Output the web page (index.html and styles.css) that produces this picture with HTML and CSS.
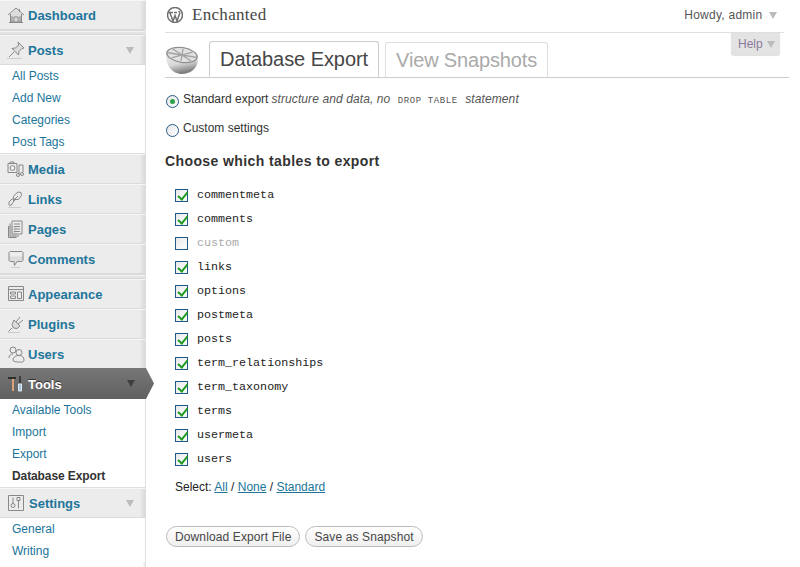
FILE: index.html
```html
<!DOCTYPE html>
<html lang="en">

<head>
  <meta charset="UTF-8">
  <title>Database Export</title>
  <link rel="stylesheet" href="styles.css">
</head>

<body>
  <aside class="sidebar">
    <a class="menu-item">
      <svg class="icon" viewBox="0 0 18 18"><path class="fill" d="M3.500 8 9 3l5.500 5v8h-11z" /><path d="M1 9 9 2l8 7M3.500 8v8h11V8M2 16.500h14M7 16v-5h4v5M5 10v6M13 10v6M12.500 3v3" /></svg>
      <b>Dashboard</b>
    </a>
    <div class="menu-sep"></div>
    <a class="menu-item open">
      <svg class="icon" viewBox="0 0 18 18"><path class="fill" d="M11 1l6 6-2 .5-3 3-.5 3.500L5 7.500 8.500 7l3-3z" /><path d="M11 1l6 6-2 .5-3 3-.5 3.500L5 7.500 8.500 7l3-3zM7 11l-5 5" /><path class="ground" d="M0 17.500h15" /></svg>
      <b>Posts</b><i class="arrow"></i>
    </a>
    <ul class="submenu">
      <li>All Posts</li>
      <li>Add New</li>
      <li>Categories</li>
      <li>Post Tags</li>
    </ul>
    <a class="menu-item">
      <svg class="icon" viewBox="0 0 18 18"><path d="M1 3.500h9v9H1zM3 3.500V2h4v1.500" /><circle cx="5.500" cy="8" r="2.500" /><path d="M12 5h4v7M12 5v9" /><circle cx="11" cy="15" r="1.500" /><circle cx="15" cy="14" r="1.500" /></svg>
      <b>Media</b>
    </a>
    <a class="menu-item">
      <svg class="icon" viewBox="0 0 18 18"><path d="M2 12l3-3 3 .5-4 6-2-.5zM8 9.500l-2-1 1-3 4-3.500 3 .5 .5 3-3 4zM6 11l5-5" /><path class="ground" d="M1 17.500h13" /></svg>
      <b>Links</b>
    </a>
    <a class="menu-item">
      <svg class="icon" viewBox="0 0 18 18"><path class="fill" d="M1.500 6h8v11.500h-8z" /><path d="M5 1h10v13H5zM3 3.500V16h9M1.500 6v11.500h8M7 4h6M7 6.500h6M7 9h6M7 11.500h6" /></svg>
      <b>Pages</b>
    </a>
    <a class="menu-item">
      <svg class="icon" viewBox="0 0 18 18"><path class="fill" d="M2 6.500h14v4l-1 1h-5l-2.500 4-.5-4H3l-1-1z" /><path d="M3 1.500h12l1 1v8l-1 1h-5l-2.500 4-.5-4H3l-1-1v-8z" /><path class="ground" d="M4 17.500h9" /></svg>
      <b>Comments</b>
    </a>
    <div class="menu-sep"></div>
    <a class="menu-item">
      <svg class="icon" viewBox="0 0 18 18"><path d="M1.500 1.500h15v14h-15zM1.500 4.500h15M3.500 7h5v2h-5zM3.500 11h5v2.500h-5zM10.500 7h4v6.500h-4z" /></svg>
      <b>Appearance</b>
    </a>
    <a class="menu-item">
      <svg class="icon" viewBox="0 0 18 18"><path class="fill" d="M7 5l6 6-3 2.500-3.500-.5L5 9.500z" /><path d="M7 5l6 6-3 2.500-3.500-.5L5 9.500zM9 7l4-5M11 9l5-4M5 13l-3.500 3.500" /><path class="ground" d="M1 17.500h12" /></svg>
      <b>Plugins</b>
    </a>
    <a class="menu-item">
      <svg class="icon" viewBox="0 0 18 18"><circle cx="6" cy="5" r="3" /><circle cx="12" cy="7.500" r="3" /><path d="M2 13c0-3 2-4 4-4M6 15c0-3 3-4.500 6-4.500s5 1.500 5 4.500-4 2-5.500 2S6 17 6 15z" /></svg>
      <b>Users</b>
    </a>
    <a class="menu-item current">
      <svg class="icon tools" viewBox="0 0 18 18"><path class="hammer" d="M6 4v12" /><path class="head" d="M1 3h8" /><path class="head thin" d="M13 1v7" /><path class="driver" d="M11.500 9h3v7h-3z" /></svg>
      <b>Tools</b><i class="arrow"></i>
    </a>
    <ul class="submenu">
      <li>Available Tools</li>
      <li>Import</li>
      <li>Export</li>
      <li class="active">Database Export</li>
    </ul>
    <a class="menu-item open">
      <svg class="icon" viewBox="0 0 18 18"><path d="M1.500 1.500h15v15h-15zM6 3.500v6M12 3.500h-2v3h3v-3zM11.500 6.500v8" /><circle cx="6" cy="11.500" r="2" /></svg>
      <b class="shifted">Settings</b><i class="arrow"></i>
    </a>
    <ul class="submenu last">
      <li>General</li>
      <li>Writing</li>
    </ul>
  </aside>

  <main class="content">
    <header class="topbar">
      <svg class="wp-logo" viewBox="0 0 16 16"><circle cx="8" cy="8" r="7.500" /><path d="M3 6l3 8 2-5.500L10 14l2.500-7c.5-2-1-3-1-3M2 5.500h4M7 5.500h3" /></svg>
      <span class="site-name">Enchanted</span>
      <span class="howdy">Howdy, admin <i class="arrow"></i></span>
    </header>
    <div class="help-row"><span class="help-tab">Help <i class="arrow"></i></span></div>

    <nav class="tabs">
      <svg class="lemon" viewBox="0 0 34 30">
        <defs>
          <linearGradient id="rind" x1="0" y1="0" x2="0.300" y2="1">
            <stop offset="0" stop-color="#f4f4f4" />
            <stop offset="0.600" stop-color="#d8d8d8" />
            <stop offset="1" stop-color="#808080" />
          </linearGradient>
        </defs>
        <path fill="url(#rind)" d="M1 6c-1 13 6 22 16 22 8 0 15-5 16-14z" />
        <g transform="rotate(9 17 9)">
          <ellipse cx="17" cy="9" rx="16" ry="8" fill="#8f8f8f" />
          <ellipse cx="17" cy="9" rx="14.500" ry="6.800" fill="#e2e2e2" />
          <path d="M3 9h28M7 4.500l20 9M27 4.500l-20 9M17 3v12" stroke="#a4a4a4" stroke-width="1.400" fill="none" />
        </g>
      </svg>
      <a class="tab active">Database Export</a>
      <a class="tab">View Snapshots</a>
    </nav>

    <form class="export-form">
      <label class="radio-row first">
        <i class="radio on"></i>
        <span>Standard export</span>
        <em>structure and data, no <code>DROP TABLE</code> statement</em>
      </label>
      <label class="radio-row">
        <i class="radio"></i>
        <span>Custom settings</span>
      </label>

      <h3>Choose which tables to export</h3>

      <ul class="tables">
        <li><i class="check on"></i>commentmeta</li>
        <li><i class="check on"></i>comments</li>
        <li class="off"><i class="check"></i>custom</li>
        <li><i class="check on"></i>links</li>
        <li><i class="check on"></i>options</li>
        <li><i class="check on"></i>postmeta</li>
        <li><i class="check on"></i>posts</li>
        <li><i class="check on"></i>term_relationships</li>
        <li><i class="check on"></i>term_taxonomy</li>
        <li><i class="check on"></i>terms</li>
        <li><i class="check on"></i>usermeta</li>
        <li><i class="check on"></i>users</li>
      </ul>

      <p class="select-links">Select: <a>All</a> / <a>None</a> / <a>Standard</a></p>

      <div class="buttons">
        <button type="button">Download Export File</button>
        <button type="button">Save as Snapshot</button>
      </div>
    </form>
  </main>
</body>

</html>
```

FILE: styles.css
```css
* {
  box-sizing: border-box;
}

html, body {
  height: 567px;
  overflow: hidden;
}

body {
  margin: 0;
  display: flex;
  width: 800px;
  background: #fff;
  font-family: "Liberation Sans", Arial, sans-serif;
  font-size: 12px;
  color: #333;
}

/* sidebar */
.sidebar {
  flex: 0 0 146px;
  width: 146px;
  height: 567px;
  background: #fff;
  border-right: 1px solid #dfdfdf;
  box-shadow: inset -3px 0 3px -2px #e4e4e4;
}

.menu-item {
  position: relative;
  display: flex;
  align-items: center;
  height: 30px;
  padding: 0 0 0 7px;
  background: #ececec;
  border-bottom: 1px solid #dcdcdc;
  border-top: 1px solid #f6f6f6;
  box-shadow: inset -5px 0 4px -3px #d4d4d4;
}

.menu-item b {
  margin-left: 3px;
  padding-top: 2px;
  font-size: 13px;
  line-height: 26px;
  color: #21759b;
}

.menu-item b.shifted {
  margin-left: 4px;
}

.menu-item .arrow {
  position: absolute;
  right: 11px;
  top: 11px;
  border-top-color: #bbb;
}

.menu-item.current {
  height: 31px;
  margin-top: -1px;
  padding-top: 1px;
  width: 154px;
  background: linear-gradient(#777, #606060);
  border: 0;
  box-shadow: none;
  clip-path: polygon(0 0, 146px 0, 154px 50%, 146px 100%, 0 100%);
  z-index: 1;
}

.menu-item.current b {
  color: #fff;
  text-shadow: 0 -1px 0 #333;
}

.menu-item.current .arrow {
  right: 19px;
  top: 12px;
  border-top-color: #3f3f3f;
}

.icon {
  flex: none;
  width: 18px;
  height: 18px;
  fill: none;
  stroke: #888;
  stroke-width: 1;
}

.icon .fill {
  fill: #dcdcdc;
  stroke: none;
}

.icon .ground {
  stroke: #ccc;
}

.icon.tools .hammer {
  stroke: #d9a27a;
  stroke-width: 2;
}

.icon.tools .head {
  stroke: #2e2e2e;
  stroke-width: 2;
}

.icon.tools .head.thin {
  stroke-width: 1.500;
}

.icon.tools .driver {
  fill: #a9c4dc;
  stroke: #dde7f0;
}

.menu-sep {
  height: 5px;
  background: #e4e4e4;
  border-top: 1px solid #d8d8d8;
  border-bottom: 1px solid #d8d8d8;
  box-shadow: inset 0 1px 0 #f3f3f3;
}

.submenu {
  list-style: none;
  margin: 0;
  padding: 0;
  background: #fff;
  border-bottom: 1px solid #dfdfdf;
}

.submenu.last {
  border-bottom: 0;
}

.submenu li {
  height: 22px;
  padding-left: 12px;
  line-height: 23px;
  color: #21759b;
}

.submenu li.active {
  color: #333;
  font-weight: bold;
  letter-spacing: -.1px;
}

.arrow {
  display: inline-block;
  width: 0;
  height: 0;
  border-left: 4px solid transparent;
  border-right: 4px solid transparent;
  border-top: 7px solid #aaa;
}

/* top of the page */
.content {
  flex: none;
  width: 643px;
  padding-left: 19px;
}

.topbar {
  display: flex;
  align-items: center;
  width: 619px;
  height: 33px;
  padding-bottom: 2px;
  border-bottom: 1px solid #dfdfdf;
}

.wp-logo {
  width: 16px;
  height: 16px;
  margin: 0 9px 0 2px;
  fill: none;
  stroke: #6f6f6f;
  stroke-width: 1.500;
}

.site-name {
  font-family: "Liberation Serif", serif;
  font-size: 17px;
  letter-spacing: .3px;
  color: #464646;
}

.howdy {
  margin-left: auto;
  margin-right: 7px;
  letter-spacing: .25px;
  color: #555;
}

.howdy .arrow {
  margin-left: 3px;
  vertical-align: 0;
  border-top-color: #bbb;
}

.help-row {
  display: flex;
  justify-content: flex-end;
  width: 619px;
  height: 0;
  padding-right: 4px;
}

.help-tab {
  display: block;
  height: 22px;
  padding: 4px 5px 3px 7px;
  background: #e3e3e3;
  border-radius: 0 0 3px 3px;
  box-shadow: 0 1px 1px #ddd;
  color: #8a7a9c;
  white-space: nowrap;
}

.help-tab .arrow {
  margin-left: 1px;
  vertical-align: 0;
  border-top-color: #bbb;
}

.tabs {
  display: flex;
  align-items: flex-end;
  width: 624px;
  height: 45px;
  border-bottom: 1px solid #ccc;
}

.lemon {
  flex: none;
  width: 34px;
  height: 30px;
  margin-bottom: 1px;
}

.tab {
  height: 36px;
  margin-bottom: -1px;
  padding: 0 10px;
  border: 1px solid #dfdfdf;
  border-bottom-color: #ccc;
  border-radius: 3px 3px 0 0;
  font-size: 20px;
  letter-spacing: -.15px;
  line-height: 34px;
  color: #aaa;
  background: #fff;
}

.tab.active {
  margin: 0 6px 0 10px;
  border-color: #ccc;
  border-bottom-color: #fff;
  letter-spacing: -.06px;
  color: #464646;
}

/* the form */
.export-form {
  padding-top: 12px;
}

.radio-row {
  display: flex;
  align-items: center;
  height: 18px;
  margin-bottom: 11px;
  color: #333;
}

.radio-row span {
  margin-left: 4px;
}

.radio-row em {
  margin-left: 3px;
  letter-spacing: .1px;
  color: #555;
}

.radio-row code {
  margin: 0 4px;
  font-family: "Liberation Mono", monospace;
  font-size: 9px;
  font-style: normal;
  letter-spacing: .6px;
}

.radio {
  position: relative;
  width: 13px;
  height: 13px;
  margin: 4px 0 0 1px;
  border: 1px solid #255b85;
  border-radius: 50%;
  background: linear-gradient(135deg, #e6e6e6, #fff);
}

.radio.on::after {
  content: "";
  position: absolute;
  top: 3px;
  left: 3px;
  width: 5px;
  height: 5px;
  border-radius: 50%;
  background: #2ca24a;
}

h3 {
  margin: 15px 0 13px;
  font-size: 14px;
  line-height: 18px;
  letter-spacing: .4px;
  color: #333;
}

.tables {
  list-style: none;
  margin: 0;
  padding: 0 0 0 10px;
}

.tables li {
  display: flex;
  align-items: center;
  height: 24px;
  font-family: "Liberation Mono", monospace;
  font-size: 11.700px;
  color: #222;
}

.tables li.off {
  color: #aaa;
}

.check {
  position: relative;
  width: 13px;
  height: 13px;
  margin: 1px 9px 0 0;
  border: 1px solid #1f5a8a;
  background: linear-gradient(135deg, #e8e8e8, #fff);
}

.check.on::after {
  content: "";
  position: absolute;
  left: 3.500px;
  top: 0;
  width: 4px;
  height: 7.500px;
  border: solid #1f9a1f;
  border-width: 0 2px 2px 0;
  transform: rotate(40deg);
}

.select-links {
  margin: 8px 0 0 10px;
  line-height: 16px;
  color: #222;
}

.select-links a {
  color: #21759b;
  text-decoration: underline;
}

.buttons {
  display: flex;
  gap: 5px;
  margin: 31px 0 0 1px;
}

button {
  height: 21px;
  padding: 0 8px;
  border: 1px solid #bbb;
  border-radius: 11px;
  background: linear-gradient(#fff, #efefef);
  font: 12px "Liberation Sans", Arial, sans-serif;
  letter-spacing: .12px;
  color: #464646;
}
```
